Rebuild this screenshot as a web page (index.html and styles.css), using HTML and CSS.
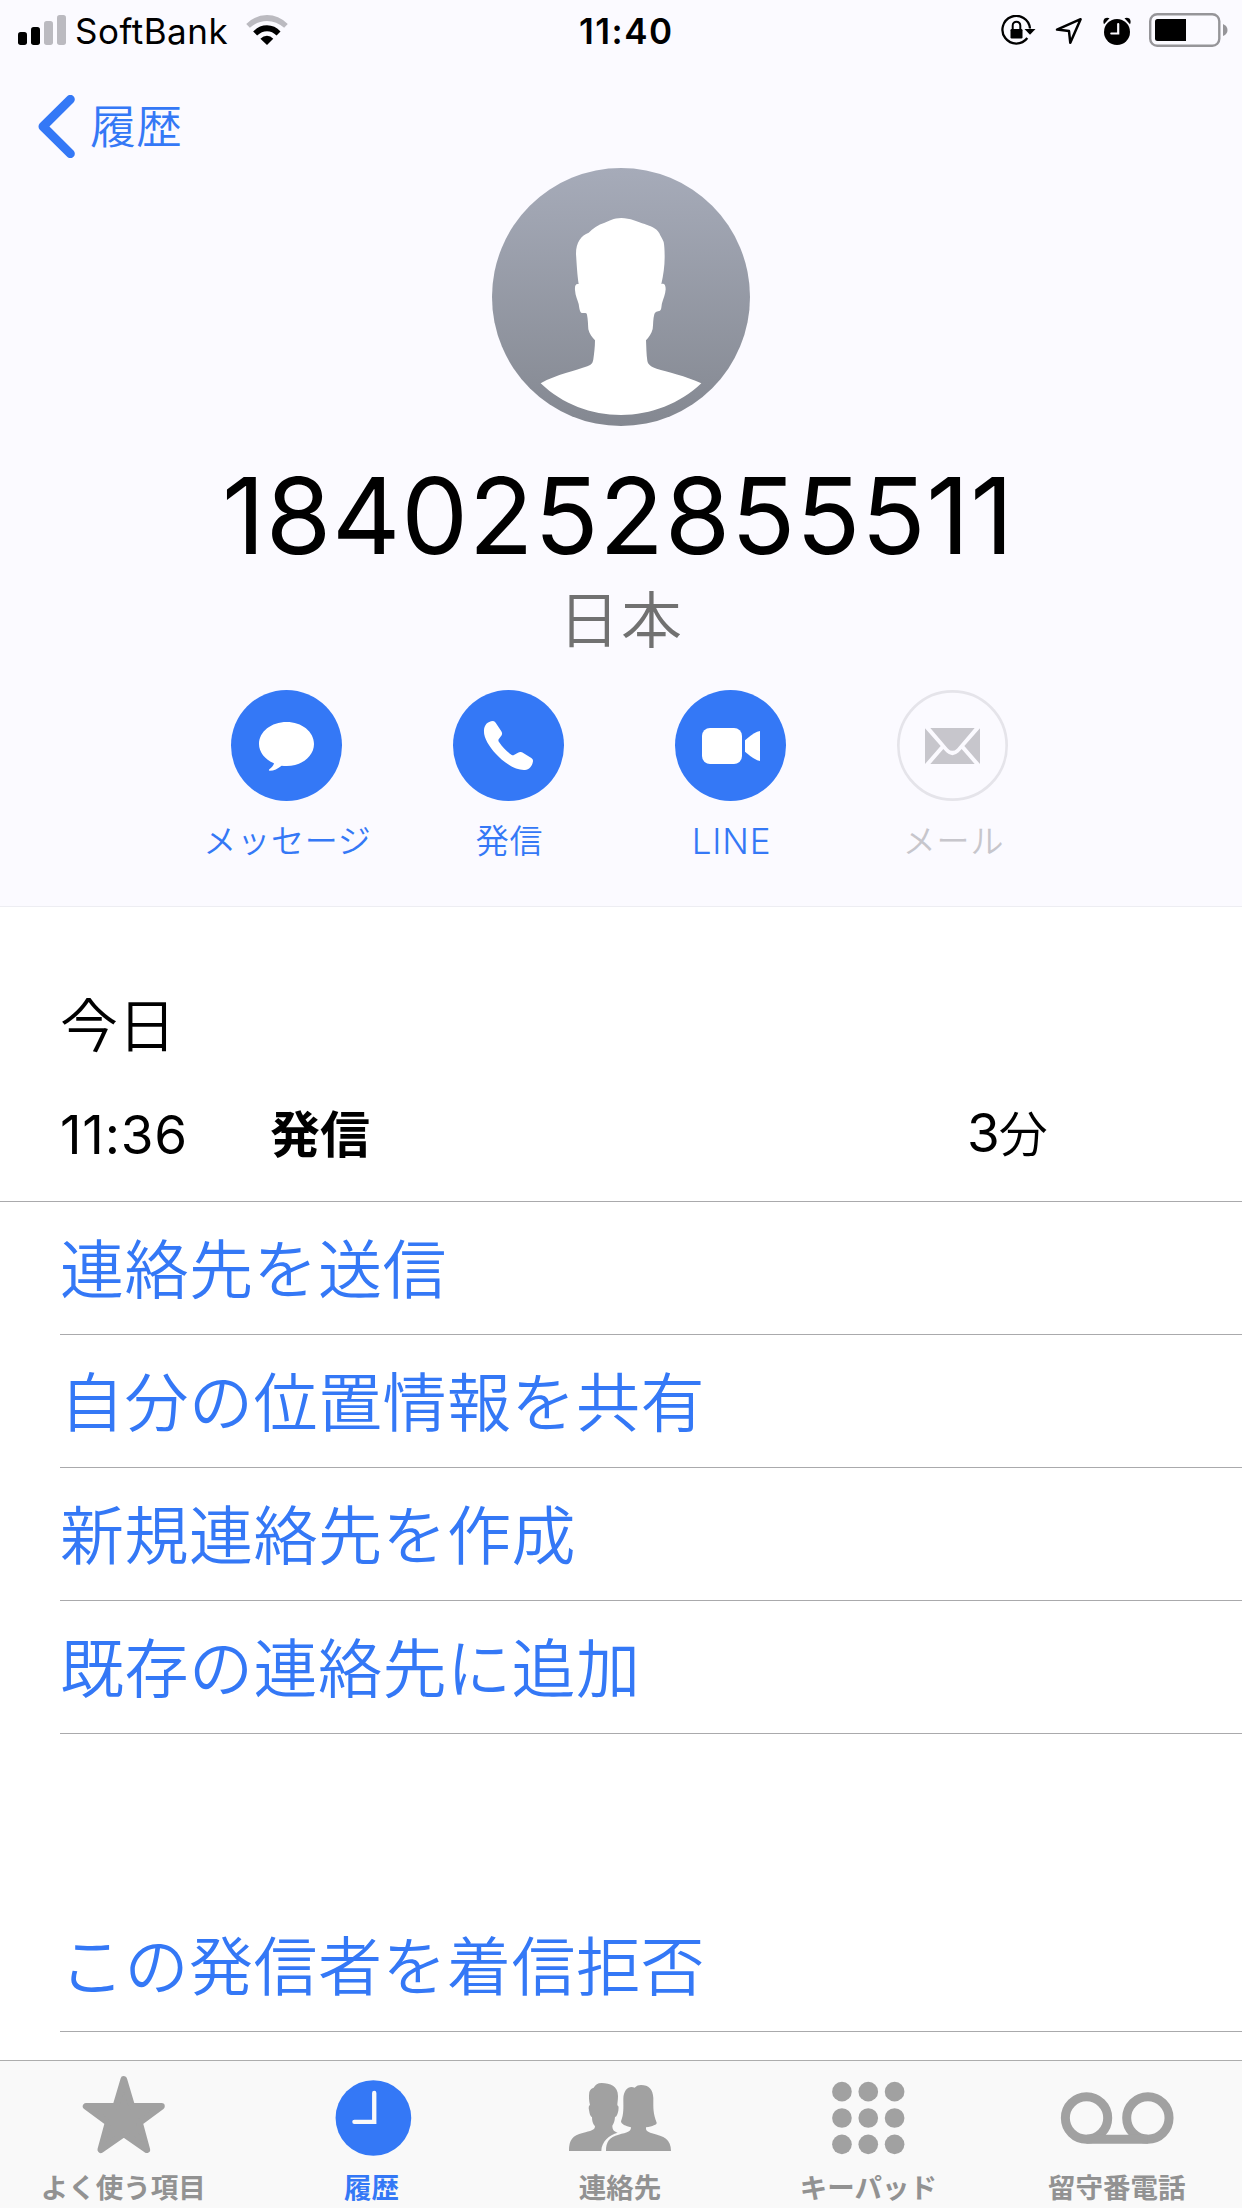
FILE: index.html
```html
<!DOCTYPE html>
<html lang="ja">
<head>
<meta charset="utf-8">
<title>履歴</title>
<link rel="stylesheet" href="styles.css">
</head>
<body>
<div class="screen">
  <header class="header">
    <div class="status">
      <div class="status-left">
        <svg class="signal" viewBox="54 45 144 90"><rect x="54" y="96" width="27" height="39" rx="8"/><rect x="93" y="81" width="27" height="54" rx="8"/><g fill="#bbbac0"><rect x="132" y="63" width="27" height="72" rx="8"/><rect x="171" y="45" width="27" height="90" rx="8"/></g></svg>
        <span class="carrier">SoftBank</span>
        <svg class="wifi" viewBox="738 44 126 91"><path d="M738 71Q766 44 801 44T864 71L853 83Q830 62 801 62T749 83Z" fill="#bbbac0"/><path d="M759 94Q777 75 801 75T842 94L830 106Q817 93 801 93T771 106Z"/><path d="M781 116Q790 107 801 107T820 116L801 135Z"/></svg>
      </div>
      <div class="clock">11:40</div>
      <div class="status-right">
        <svg class="rotation-lock" viewBox="0 0 35 30"><path d="M29 13.500A13.800 13.800 0 1 0 26.300 23" fill="none" stroke="#000" stroke-width="2.300"/><path d="M23.500 14H34.500L29 19.800Z"/><rect x="9.500" y="14" width="12" height="9.500" rx="1.200"/><path d="M11.700 15V10.500a3.800 3.800 0 0 1 7.600 0V15" fill="none" stroke="#000" stroke-width="2"/></svg>
        <svg class="location" viewBox="0 0 28 28"><path d="M25.600 2.200L15.300 25.800L14 14.100L2 12.600Z" fill="none" stroke="#000" stroke-width="2.500" stroke-linejoin="round"/></svg>
        <svg class="alarm" viewBox="0 0 28 28"><circle cx="14" cy="15" r="13"/><path d="M1 7.200Q-.5 4 1.600 1.600Q4 .1 6.500 1.300M27 7.200Q28.500 4 26.400 1.600Q24 .1 21.500 1.300"/><path d="M15.200 7V16.500H8.300" fill="none" stroke="#fbfaff" stroke-width="2.200" stroke-linecap="round"/></svg>
        <svg class="battery" viewBox="0 0 79 34"><rect x="1.200" y="1.200" width="69.100" height="31.600" rx="7" fill="none" stroke="#969599" stroke-width="2.400"/><path d="M8.500 6H37V28H8.500Q6 28 6 25.500V8.500Q6 6 8.500 6Z"/><path d="M74 11Q78.500 13 78.500 17T74 23Z" fill="#969599"/></svg>
      </div>
    </div>
    <nav class="nav">
      <svg class="chevron" viewBox="114 285 111 189"><path d="M211 298L129 379.500L211 461" fill="none" stroke="#3478f6" stroke-width="27" stroke-linecap="round" stroke-linejoin="round"/></svg>
      <span>履歴</span>
    </nav>
    <svg class="avatar" viewBox="36 24 774 774">
      <defs><linearGradient id="shade" x1="0" y1="0" x2="0" y2="1"><stop offset="0" stop-color="#a6abb9"/><stop offset="1" stop-color="#848891"/></linearGradient></defs>
      <circle cx="423" cy="411" r="387" fill="url(#shade)"/>
      <path fill="#fff" d="M424 174C400 174 388 184 374 188C354 194 338 206 326 218C304 226 288 246 288 282C290 312 292 348 296 372C287 370 284 376 285 390C286 408 293 420 296 432C298 444 299 458 306 459C316 459 320 458 321 464C324 478 324 496 325 508C328 522 337 533 345 541C345 562 342 584 340 598C338 612 332 615 322 619C288 632 230 643 182 670C248 733 333 765 423 765C513 765 600 731 664 670C618 648 560 635 530 626C514 620 504 614 502 602C499 584 499 560 498 541C506 532 515 520 518 507C520 492 519 476 523 463C525 454 532 455 540 452C545 449 544 438 546 430C550 416 556 404 557 388C557 374 553 369 544 372C550 348 554 318 554 292C554 270 553 256 551 246C547 236 541 228 538 220C530 203 508 198 494 192C474 186 450 174 424 174Z"/>
    </svg>
    <h1 class="number">1840252855511</h1>
    <p class="country">日本</p>
    <div class="actions">
      <div class="action">
        <svg viewBox="123 60 333 333"><circle cx="289.500" cy="226.500" r="166.500" fill="#3478f6"/><path fill="#fff" d="M290 156C335 156 372 185 372 222S335 288 290 288C284 288 279 287 275 287C263 296 252 302 239 302C236 302 236 300 238 298C246 292 251 286 252 280C224 268 207 246 207 222C207 185 244 156 290 156Z"/></svg>
        <span>メッセージ</span>
      </div>
      <div class="action">
        <svg viewBox="789 60 333 333"><circle cx="955.500" cy="226.500" r="166.500" fill="#3478f6"/><path fill="#fff" d="M882 180C883 166 892 154 909 153Q914 153 917 158L934 184Q938 190 935 196L926 208Q924 212 927 216C938 232 950 245 964 254Q968 257 973 254L984 248Q990 244 996 247L1024 264Q1030 268 1029 274C1027 288 1018 299 1005 300C978 302 944 280 918 252C896 228 880 202 882 180Z"/></svg>
        <span>発信</span>
      </div>
      <div class="action">
        <svg viewBox="165 60 333 333"><circle cx="331.500" cy="226.500" r="166.500" fill="#3478f6"/><rect x="246" y="174" width="120" height="108" rx="24" fill="#fff"/><path fill="#fff" d="M375 211Q405 184 420 183V273Q405 271 375 245Z"/></svg>
        <span class="latin">LINE</span>
      </div>
      <div class="action disabled">
        <svg viewBox="831 60 333 333"><circle cx="997.500" cy="226.500" r="162.500" fill="none" stroke="#e5e4ea" stroke-width="8"/><path fill="#c7c6cc" d="M931 174H1064L1011 236Q997 249 984 236ZM915 175L962 228L915 282ZM1080 175L1033 228L1080 282ZM970 237L979 247Q997 264 1016 247L1025 237L1064 282H931Z"/></svg>
        <span>メール</span>
      </div>
    </div>
  </header>
  <main class="content">
    <h2 class="day">今日</h2>
    <div class="call">
      <span class="time">11:36</span>
      <strong>発信</strong>
      <span class="duration"><span class="digits">3</span>分</span>
    </div>
    <ul class="menu">
      <li>連絡先を送信</li>
      <li>自分の位置情報を共有</li>
      <li>新規連絡先を作成</li>
      <li>既存の連絡先に追加</li>
    </ul>
    <ul class="menu block">
      <li>この発信者を着信拒否</li>
    </ul>
  </main>
  <footer class="tabs">
    <div class="tab">
      <svg viewBox="192.600 33 360 327"><path d="M372 88L396 169H485L419 218L441 299L372 251L303 299L325 218L259 169H348Z" stroke="#a1a1a1" stroke-width="20" stroke-linejoin="round"/></svg>
      <span>よく使う項目</span>
    </div>
    <div class="tab active">
      <svg viewBox="937.800 33 360 327"><circle cx="1119" cy="204" r="113.500"/><path d="M1121.500 129V215.500H1062" fill="none" stroke="#f9f9f9" stroke-width="13" stroke-linecap="round"/></svg>
      <span>履歴</span>
    </div>
    <div class="tab">
      <svg viewBox="183 33 360 327"><path d="M305 99C330 99 354 108 354 138C354 150 352 158 352 166C357 168 356 174 355 182C353 192 350 200 345 201C344 214 341 221 337 227C337 238 341 244 353 248C328 254 304 276 304 303H207C207 270 218 256 248 249C272 243 285 241 285 229C278 221 276 212 276 201C270 199 269 190 267 180C265 172 267 166 270 165C267 154 266 140 268 126C271 118 276 114 281 113C286 104 293 99 305 99Z"/><path d="M404 113C410 107 416 105 423 105C446 105 459 118 460 144C460 178 459 188 470 218C471 224 458 228 438 232C437 242 441 245 456 250C492 259 513 268 513 303H318C318 275 328 261 356 254C382 248 393 245 393 232C377 229 363 222 363 214C372 190 370 176 370 146C371 118 387 106 404 113Z"/></svg>
      <span>連絡先</span>
    </div>
    <div class="tab">
      <svg viewBox="928.200 33 360 327"><circle cx="1027" cy="125" r="29.500"/><circle cx="1106" cy="125" r="29.500"/><circle cx="1185" cy="125" r="29.500"/><circle cx="1027" cy="204" r="29.500"/><circle cx="1106" cy="204" r="29.500"/><circle cx="1185" cy="204" r="29.500"/><circle cx="1027" cy="283" r="29.500"/><circle cx="1106" cy="283" r="29.500"/><circle cx="1185" cy="283" r="29.500"/></svg>
      <span>キーパッド</span>
    </div>
    <div class="tab">
      <svg viewBox="323.400 33 360 327"><g fill="none" stroke="#a1a1a1" stroke-width="27"><circle cx="409" cy="204" r="63.500"/><circle cx="593" cy="204" r="63.500"/><path d="M409 267.500H593"/></g></svg>
      <span>留守番電話</span>
    </div>
  </footer>
</div>
</body>
</html>
```
FILE: styles.css
```css
* { box-sizing: border-box; margin: 0; padding: 0; }

body {
  font-family: Inter, "Noto Sans CJK JP", sans-serif;
  font-weight: 400;
  color: #000;
  background: #fff;
}

svg { display: block; flex: none; }
ul { list-style: none; }

.screen {
  width: 1242px;
  height: 2208px;
  display: flex;
  flex-direction: column;
  overflow: hidden;
}

.header {
  height: 907px;
  background: #fbfaff;
  border-bottom: 1px solid #ededf2;
}

.status {
  height: 62px;
  display: grid;
  grid-template-columns: 579px 1fr auto;
  align-items: center;
  padding-right: 14px;
  font-size: 35px;
  line-height: 62px;
}
.status-left { display: flex; align-items: center; padding-left: 18px; }
.signal { width: 48px; height: 30px; margin: 0 9px 2px 0; }
.carrier { width: 171px; letter-spacing: .5px; }
.wifi { width: 42px; height: 30px; margin-bottom: 2px; }
.clock { font-weight: 600; letter-spacing: 1.5px; }
.status-right { display: flex; align-items: center; }
.rotation-lock { width: 35px; height: 30px; margin: 0 19px 2px 0; }
.location { width: 28px; height: 28px; margin-right: 20px; }
.alarm { width: 28px; height: 28px; margin: 0 18px 1px 0; }
.battery { width: 79px; height: 34px; margin-bottom: 2px; }

.nav {
  height: 106px;
  padding: 23px 0 0 38px;
  display: flex;
  align-items: center;
  gap: 15px;
  color: #3478f6;
  font-size: 46px;
  font-weight: 350;
  line-height: 60px;
}
.nav span { padding-bottom: 2px; }
.chevron { width: 37px; height: 63px; }

.avatar { width: 258px; height: 258px; margin: 0 auto; }

.number {
  margin-top: 30px;
  padding-right: 6px;
  font-size: 106px;
  font-weight: 400;
  letter-spacing: .7px;
  line-height: 120px;
  text-align: center;
}
.country {
  margin-top: 10px;
  color: #717171;
  font-size: 61px;
  font-weight: 350;
  letter-spacing: 1.5px;
  line-height: 70px;
  text-align: center;
}

.actions {
  width: 888px;
  margin: 34px 0 0 175.5px;
  display: grid;
  grid-template-columns: repeat(4, 1fr);
}
.action {
  display: flex;
  flex-direction: column;
  align-items: center;
  gap: 20px;
  color: #3478f6;
  font-size: 33px;
  font-weight: 350;
  letter-spacing: .8px;
  line-height: 40px;
}
.action span { padding-left: 2px; }
.action svg { width: 111px; height: 111px; }
.action .latin { font-size: 35px; }
.disabled { color: #c7c6cc; }

.content { flex: 1; }
.day {
  margin-top: 89px;
  padding-left: 60px;
  font-size: 58px;
  font-weight: 350;
  line-height: 60px;
}
.call {
  height: 97px;
  margin-top: 49px;
  padding-left: 60px;
  display: grid;
  grid-template-columns: 210px 697px auto;
  font-size: 53px;
  line-height: 60px;
  border-bottom: 1px solid #aaaaac;
}
.time { letter-spacing: .8px; }
.call strong { font-size: 50px; font-weight: 700; }
.duration { font-size: 49px; font-weight: 350; }
.digits { font-size: 53px; font-weight: 400; letter-spacing: -1px; line-height: 1; }

.menu { margin-left: 60px; }
.menu li {
  height: 133px;
  padding-top: 1px;
  border-bottom: 1px solid #aaaaac;
  color: #3478f6;
  font-size: 64px;
  font-weight: 350;
  letter-spacing: .5px;
  line-height: 133px;
}
.block { margin-top: 165px; }

.tabs {
  height: 148px;
  display: grid;
  grid-template-columns: repeat(5, 1fr);
  background: #f9f9f9;
  border-top: 1px solid #adadad;
}
.tab {
  display: flex;
  flex-direction: column;
  align-items: center;
  color: #929292;
  fill: #a1a1a1;
  font-size: 27.5px;
  font-weight: 700;
  line-height: 36px;
}
.tab span { padding-right: 2px; }
.tab svg { width: 120px; height: 109px; }
.active { color: #3478f6; fill: #3478f6; }
```
